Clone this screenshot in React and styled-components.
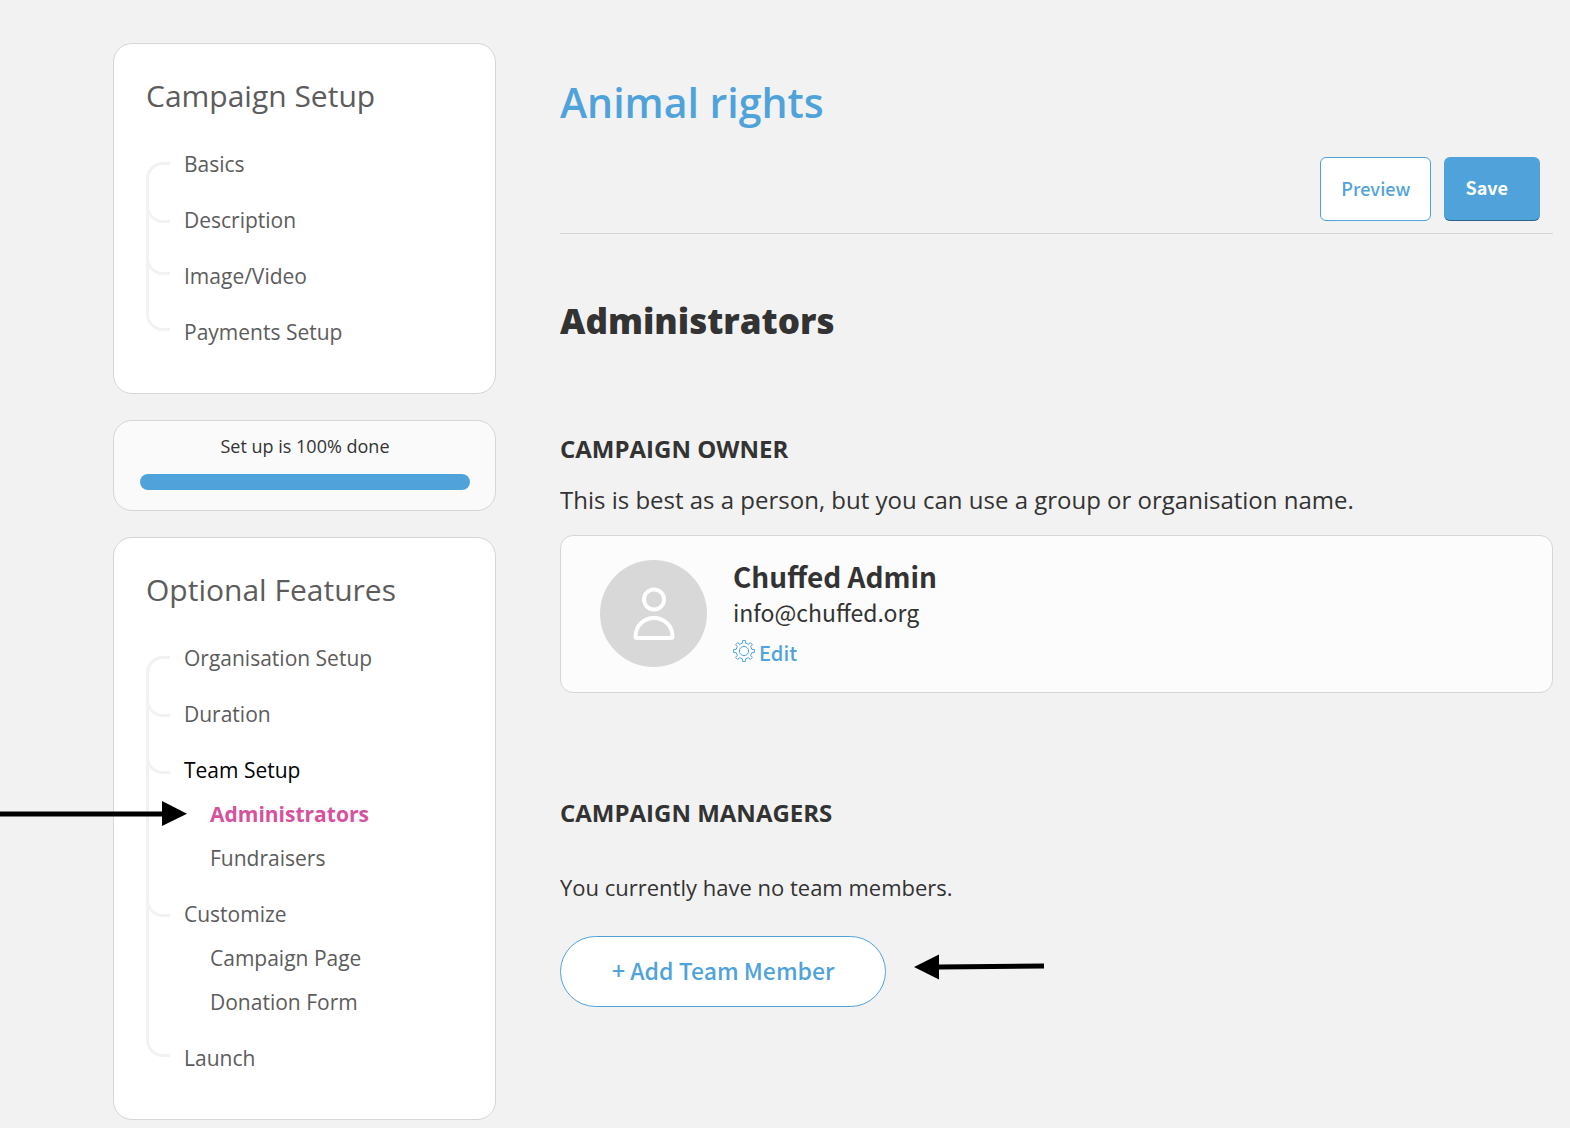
import React from 'react';
import styled, { createGlobalStyle } from 'styled-components';

const setupMenu = {
  title: 'Campaign Setup',
  branches: [61, 52],
  items: [
    { label: 'Basics' },
    { label: 'Description' },
    { label: 'Image/Video' },
    { label: 'Payments Setup' },
  ],
};

const optionalMenu = {
  title: 'Optional Features',
  branches: [61, 57, 143],
  items: [
    { label: 'Organisation Setup' },
    { label: 'Duration' },
    {
      label: 'Team Setup',
      open: true,
      children: [{ label: 'Administrators', current: true }, { label: 'Fundraisers' }],
    },
    {
      label: 'Customize',
      children: [{ label: 'Campaign Page' }, { label: 'Donation Form' }],
    },
    { label: 'Launch' },
  ],
};

const progress = 100;

const GlobalStyle = createGlobalStyle`
  * {
    box-sizing: border-box;
  }

  body {
    margin: 0;
    background-color: #f2f2f2;
    color: #333333;
    font-family: 'Open Sans', sans-serif;
  }

  h1, h2, h3, p, ul {
    margin: 0;
    padding: 0;
  }

  ul {
    list-style: none;
  }

  a {
    text-decoration: none;
  }

  button {
    font-family: 'Noto Sans CJK SC', sans-serif;
    cursor: pointer;
  }
`;

const Page = styled.div`
  display: flex;
  align-items: flex-start;
  gap: 64px;
  padding: 43px 17px 8px 113px;
`;

const Sidebar = styled.aside`
  flex: 0 0 383px;
  display: flex;
  flex-direction: column;
  gap: 26px;
`;

const MenuCard = styled.nav`
  background-color: #ffffff;
  border: 1px solid #d6d6d6;
  border-radius: 19px;
  padding: 31px 32px 46px;

  h2 {
    color: #5c5c5c;
    font-weight: 500;
    font-size: 30px;
    line-height: 42px;
    margin-bottom: 32px;
  }
`;

const MenuBody = styled.div`
  display: flex;
  gap: 14px;
`;

const Tree = styled.div`
  width: 24px;
  margin: 13px 0 16px;
  border: 3px solid #f2f2f2;
  border-right: none;
  border-radius: 17px 0 0 17px;
`;

const Branch = styled.div`
  height: ${({ $height }) => $height}px;
  margin-left: -3px;
  border: solid #f2f2f2;
  border-width: 0 0 3px 3px;
  border-bottom-left-radius: 17px;

  &:first-child {
    margin-top: -3px;
    border-top-width: 3px;
    border-top-left-radius: 17px;
  }
`;

const MenuList = styled.ul`
  flex: 1;
  display: flex;
  flex-direction: column;
  gap: 26px;
`;

const SubList = styled.ul`
  padding-left: 26px;

  li {
    position: relative;
    margin-top: 14px;
  }
`;

const MenuLink = styled.a`
  display: block;
  font-weight: ${({ $current }) => ($current ? 700 : 500)};
  font-size: 21px;
  line-height: 30px;
  color: ${({ $current, $open }) => ($current ? '#d6529c' : $open ? '#000000' : '#5c5c5c')};
`;

const ProgressCard = styled.section`
  background-color: #fafafa;
  border: 1px solid #d6d6d6;
  border-radius: 19px;
  padding: 12px 25px 20px 26px;

  p {
    font-weight: 500;
    font-size: 18px;
    line-height: 26px;
    text-align: center;
    margin-bottom: 15px;
  }
`;

const ProgressTrack = styled.div`
  height: 16px;
  border-radius: 8px;
  background-color: #e4e4e4;
  overflow: hidden;
`;

const ProgressFill = styled.div`
  height: 100%;
  background-color: #50a3da;
`;

const Main = styled.main`
  flex: 1;
  min-width: 0;
  padding-top: 30px;
`;

const Header = styled.header`
  border-bottom: 1px solid #d6d6d6;
  padding-bottom: 12px;

  h1 {
    color: #50a3da;
    font-weight: 600;
    font-size: 41px;
    line-height: 58px;
    margin-bottom: 26px;
  }
`;

const Actions = styled.div`
  display: flex;
  justify-content: flex-end;
  gap: 13px;
  padding-right: 13px;
`;

const PreviewButton = styled.button`
  height: 64px;
  padding: 0 20px 3px;
  border: 1px solid #50a3da;
  border-radius: 6px;
  background-color: #ffffff;
  color: #50a3da;
  font-weight: 500;
  font-size: 18px;
`;

const SaveButton = styled.button`
  height: 64px;
  padding: 0 32px 3px 21px;
  border: none;
  border-bottom: 1px solid #2b6389;
  border-radius: 6px;
  background-color: #50a3da;
  color: #ffffff;
  font-weight: 700;
  font-size: 18px;
`;

const PageHeading = styled.h2`
  font-weight: 800;
  font-size: 35px;
  line-height: 50px;
  margin: 62px 0 86px;
`;

const Section = styled.section`
  margin-bottom: 103px;

  h3 {
    font-weight: 700;
    font-size: 24px;
    line-height: 34px;
    text-transform: uppercase;
    margin-bottom: ${({ $gap }) => $gap}px;
  }
`;

const Text = styled.p`
  font-size: ${({ $size }) => $size}px;
  line-height: 34px;
`;

const OwnerCard = styled.div`
  display: flex;
  gap: 26px;
  margin-top: 18px;
  padding: 22px 39px 16px;
  background-color: #fcfcfc;
  border: 1px solid #d6d6d6;
  border-radius: 13px;
`;

const Avatar = styled.div`
  width: 107px;
  height: 107px;
  margin-top: 2px;
  border-radius: 50%;
  background-color: #d8d8d8;
  display: flex;
  align-items: center;
  justify-content: center;
`;

const OwnerInfo = styled.div`
  font-family: 'Noto Sans CJK SC', sans-serif;

  .name {
    font-weight: 700;
    font-size: 28px;
    line-height: 36px;
  }

  .email {
    font-size: 23px;
    line-height: 36px;
  }
`;

const EditLink = styled.a`
  display: flex;
  align-items: center;
  gap: 4px;
  color: #50a3da;
  font-weight: 500;
  font-size: 20px;
  line-height: 46px;

  svg {
    margin-bottom: 4px;
  }
`;

const AddRow = styled.div`
  display: flex;
  align-items: center;
  gap: 28px;
  margin-top: 32px;

  svg {
    margin-bottom: 10px;
  }
`;

const AddButton = styled.button`
  height: 71px;
  padding: 0 51px 4px;
  border: 1px solid #50a3da;
  border-radius: 36px;
  background-color: #ffffff;
  color: #50a3da;
  font-weight: 500;
  font-size: 23px;
`;

const MenuPointer = styled.svg`
  position: absolute;
  right: 100%;
  top: 2px;
  margin-right: 23px;
`;

const teeth = [0, 45, 90, 135, 180, 225, 270, 315];

// outline of an eight-toothed wheel around (11, 11)
const gearOutline = () => {
  const point = (radius, degrees) => {
    const angle = (degrees * Math.PI) / 180;
    return `${(11 + radius * Math.cos(angle)).toFixed(2)} ${(11 + radius * Math.sin(angle)).toFixed(2)}`;
  };
  const points = teeth.flatMap((t) => [point(8, t - 12), point(10.5, t - 8), point(10.5, t + 8), point(8, t + 12)]);
  return `M${points.join('L')}Z`;
};

const GearIcon = () => (
  <svg width="22" height="22" viewBox="0 0 22 22" fill="none" stroke="#50a3da" strokeLinejoin="round" aria-hidden="true">
    <path d={gearOutline()} />
    <circle cx="11" cy="11" r="4.6" />
  </svg>
);

const PersonIcon = () => (
  <svg width="42" height="54" viewBox="0 0 42 54" fill="none" stroke="#ffffff" strokeWidth="4" strokeLinejoin="round" aria-hidden="true">
    <circle cx="21" cy="12.5" r="10" />
    <path d="M2.500 49.500C2.500 38.500 11 31 21 31S39.500 38.500 39.500 49.500Q39.500 51 38 51H4Q2.500 51 2.500 49.500Z" />
  </svg>
);

const Menu = ({ menu }) => (
  <MenuCard aria-label={menu.title}>
    <h2>{menu.title}</h2>
    <MenuBody>
      <Tree>
        {menu.branches.map((height, index) => (
          <Branch key={index} $height={height} />
        ))}
      </Tree>
      <MenuList>
        {menu.items.map((item) => (
          <li key={item.label}>
            <MenuLink href="#" $open={item.open}>{item.label}</MenuLink>
            {item.children && (
              <SubList>
                {item.children.map((child) => (
                  <li key={child.label}>
                    {child.current && (
                      <MenuPointer width="187" height="26" viewBox="0 0 187 26" aria-hidden="true">
                        <path d="M0 10.5H162V0L187 12.8L162 25V15.5H0Z" />
                      </MenuPointer>
                    )}
                    <MenuLink href="#" $current={child.current}>{child.label}</MenuLink>
                  </li>
                ))}
              </SubList>
            )}
          </li>
        ))}
      </MenuList>
    </MenuBody>
  </MenuCard>
);

const App = () => {
  return (
    <>
      <GlobalStyle />
      <Page>
        <Sidebar>
          <Menu menu={setupMenu} />
          <ProgressCard>
            <p>Set up is {progress}% done</p>
            <ProgressTrack role="progressbar" aria-label="Set up" aria-valuenow={progress}>
              <ProgressFill style={{ width: `${progress}%` }} />
            </ProgressTrack>
          </ProgressCard>
          <Menu menu={optionalMenu} />
        </Sidebar>
        <Main>
          <Header>
            <h1>Animal rights</h1>
            <Actions>
              <PreviewButton type="button">Preview</PreviewButton>
              <SaveButton type="button">Save</SaveButton>
            </Actions>
          </Header>
          <PageHeading>Administrators</PageHeading>
          <Section $gap={17}>
            <h3>Campaign Owner</h3>
            <Text $size={24}>This is best as a person, but you can use a group or organisation name.</Text>
            <OwnerCard>
              <Avatar>
                <PersonIcon />
              </Avatar>
              <OwnerInfo>
                <p className="name">Chuffed Admin</p>
                <p className="email">info@chuffed.org</p>
                <EditLink href="#">
                  <GearIcon />
                  Edit
                </EditLink>
              </OwnerInfo>
            </OwnerCard>
          </Section>
          <Section $gap={40}>
            <h3>Campaign Managers</h3>
            <Text $size={22}>You currently have no team members.</Text>
            <AddRow>
              <AddButton type="button">+ Add Team Member</AddButton>
              <svg width="130" height="26" viewBox="0 0 130 26" aria-hidden="true">
                <path d="M0 13L25 0.500V10.500L130 9.500V14.500L25 15.500V25.500Z" />
              </svg>
            </AddRow>
          </Section>
        </Main>
      </Page>
    </>
  );
};

export default App;
